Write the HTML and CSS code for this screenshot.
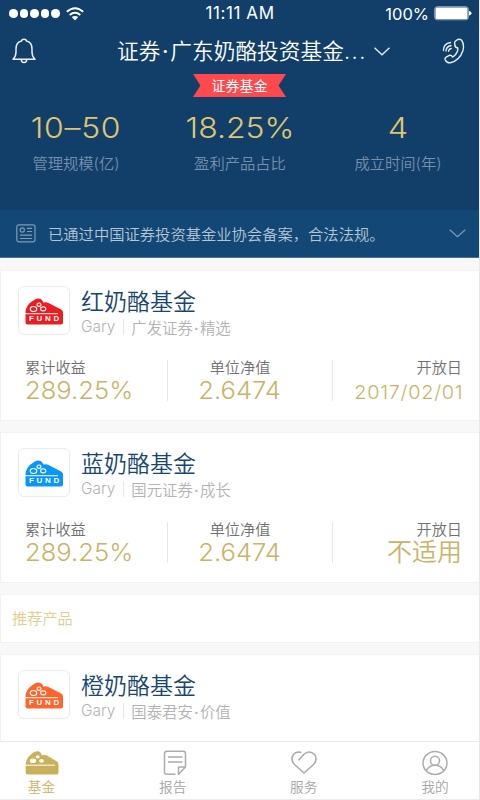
FILE: index.html
```html
<!DOCTYPE html>
<html lang="zh-CN">
<head>
<meta charset="utf-8">
<title>基金</title>
<link rel="stylesheet" href="styles.css">
</head>
<body>
<svg class="defs" width="0" height="0" aria-hidden="true">
  <symbol id="cheese" viewBox="0 0 38 27">
    <path fill="currentColor" d="M.5 13.500Q1.500 7.500 5.500 4.500L9.500 1.800Q13 -.5 16 1.300Q18 2.500 18.300 4.500L21 4.300Q23 4.500 25 5.800L36.500 11.800Q38 12.700 38 14.500V24.500Q38 26.500 36 26.500H2.500Q.5 26.500 .5 24.500Z"/>
    <path stroke="#fff" stroke-width="1" d="M0 15.700H33"/>
    <g fill="none" stroke="#fff" stroke-width="1.100"><ellipse cx="8.500" cy="11" rx="3.300" ry="2.500"/><ellipse cx="14" cy="6.700" rx="2" ry="1.700"/><ellipse cx="18.200" cy="10.800" rx="2.600" ry="2.100"/></g>
  </symbol>
</svg>
<div class="app">
  <header class="header">
    <div class="status">
      <div class="signal"><i></i><i></i><i></i><i></i><i></i>
        <svg width="18" height="14" viewBox="0 0 18 14" fill="none" stroke="#fff" stroke-width="2"><path d="M.8 4.800Q9-2.300 17.200 4.800M3.700 8Q9 3.600 14.300 8"/><path fill="#fff" stroke="none" d="M5.800 10.100Q9 7.700 12.200 10.100L9 13.400Z"/></svg>
      </div>
      <div class="time">11:11 AM</div>
      <div class="power"><span>100%</span>
        <svg width="38" height="15" viewBox="0 0 38 15"><rect x=".75" y=".75" width="33.500" height="13" rx="2.500" fill="none" stroke="#9fb3c6"/><rect x="1.500" y="1.500" width="32" height="11.500" rx="1.500" fill="#fff"/><path fill="#fff" d="M35 5Q37.500 5.300 37.500 7.300T35 9.600Z"/></svg>
      </div>
    </div>
    <div class="nav">
      <svg class="bell" width="24" height="26" viewBox="0 0 24 26" fill="none" stroke="#e9eef3" stroke-width="1.500" stroke-linejoin="round"><path d="M1 21.200Q4 18.500 4 14V11Q4 4.200 9.600 3Q9.800 1.200 12 1.200T14.400 3Q20 4.200 20 11V14Q20 18.500 23 21.200ZM9.300 21.500Q9.300 24.500 12 24.500T14.700 21.500"/></svg>
      <h1 class="title">证券<b class="dot">·</b>广东奶酪投资基金<span class="more">...</span></h1>
      <svg class="caret" width="16" height="9" viewBox="0 0 16 9" fill="none" stroke="#e9eef3" stroke-width="1.300"><path d="M.5 .7L8 7.800L15.500 .7"/></svg>
      <svg class="phone" width="23" height="26" viewBox="0 0 23 26" fill="none" stroke="#e9eef3" stroke-width="1.400" stroke-linejoin="round" stroke-linecap="round"><path d="M14.500 2.300Q17 .5 19.500 2Q22.700 6.500 20.800 13Q17.500 22.500 8.500 24.700Q5 25.200 3.200 21.800Q2.500 20 4.500 18.800L7.500 17.300Q9.500 16.800 10.500 19Q14 17.300 15.700 12.500Q16 11 15.600 9.800Q13.300 9.700 12.900 7.500L12.600 4.500Q12.700 3.200 14.500 2.300Z"/><path d="M1.500 12.500Q1.500 5.500 8.500 4.500M4 13Q4.200 8.500 9 7.500M6.500 13.200Q7 11 9.200 10.500"/></svg>
    </div>
    <div class="ribbon">证券基金</div>
    <div class="stats">
      <div><strong class="range">10–50</strong><span>管理规模(亿)</span></div>
      <div><strong>18.25%</strong><span>盈利产品占比</span></div>
      <div><strong class="years">4</strong><span>成立时间(年)</span></div>
    </div>
    <div class="notice">
      <svg width="20" height="19" viewBox="0 0 20 19" fill="none" stroke="#7e9ab4" stroke-width="1.200"><rect x=".8" y=".8" width="18.200" height="17" rx="2"/><circle cx="6.300" cy="6" r="2.100"/><path d="M11 4.300H16M11 7.500H16M4 11.200H16M4 14.500H16"/></svg>
      <p>已通过中国证券投资基金业协会备案，合法法规。</p>
      <svg width="17" height="9" viewBox="0 0 17 9" fill="none" stroke="#7e9ab4" stroke-width="1.200"><path d="M.7 .7L8.500 7.800L16.300 .7"/></svg>
    </div>
  </header>

  <main class="list">
    <article class="card">
      <div class="head">
        <div class="logo red"><svg width="38" height="27"><use href="#cheese"/></svg><em>FUND</em></div>
        <div class="names"><h2>红奶酪基金</h2><p><span class="owner">Gary</span><span class="org">广发证券<b class="dot">·</b>精选</span></p></div>
      </div>
      <div class="figures">
        <div><label>累计收益</label><strong>289.25%</strong></div>
        <div class="mid"><label>单位净值</label><strong>2.6474</strong></div>
        <div class="end"><label>开放日</label><strong class="date">2017/02/01</strong></div>
      </div>
    </article>
    <article class="card">
      <div class="head">
        <div class="logo blue"><svg width="38" height="27"><use href="#cheese"/></svg><em>FUND</em></div>
        <div class="names"><h2>蓝奶酪基金</h2><p><span class="owner">Gary</span><span class="org">国元证券<b class="dot">·</b>成长</span></p></div>
      </div>
      <div class="figures">
        <div><label>累计收益</label><strong>289.25%</strong></div>
        <div class="mid"><label>单位净值</label><strong>2.6474</strong></div>
        <div class="end"><label>开放日</label><strong class="na">不适用</strong></div>
      </div>
    </article>
    <h3 class="section">推荐产品</h3>
    <article class="card last">
      <div class="head">
        <div class="logo orange"><svg width="38" height="27"><use href="#cheese"/></svg><em>FUND</em></div>
        <div class="names"><h2>橙奶酪基金</h2><p><span class="owner">Gary</span><span class="org">国泰君安<b class="dot">·</b>价值</span></p></div>
      </div>
    </article>
  </main>

  <nav class="tabs">
    <a class="active"><svg width="34" height="26" viewBox="0 0 34 26"><path fill="#c9b15c" d="M.7 14Q1.500 7.500 6 4.500Q10 .5 13.500 1.300Q16 2 16.700 5.200L20 5Q22 5.300 24 6.800L32 11.500Q33.500 12.500 33.500 14.500V22.500Q33.500 24.500 31.500 24.500H2.500Q.7 24.500 .7 22.500Z"/><path stroke="#fff" d="M1 15.200H30"/><g fill="#fff"><ellipse cx="8" cy="10.800" rx="3.200" ry="2.300"/><ellipse cx="12.700" cy="6.800" rx="2" ry="1.600"/><ellipse cx="16.600" cy="10.800" rx="2.400" ry="1.900"/></g></svg><span>基金</span></a>
    <a><svg class="report" width="24" height="26" viewBox="0 0 24 26" fill="none" stroke="#acacac" stroke-width="1.500" stroke-linejoin="round"><path d="M12.500 24.300H4Q1.500 24.300 1.500 22V3.500Q1.500 1.200 4 1.200H20Q22.500 1.200 22.500 3.500V17L15.500 24.300V17H22M5 7H19.500M5 12H19.500"/></svg><span>报告</span></a>
    <a><svg width="26" height="26" viewBox="0 0 26 26" fill="none" stroke="#acacac" stroke-width="1.600" stroke-linecap="round"><path d="M8 9.800L13 4.300Q15.500 1.800 18.500 2Q25 3 25 9Q25 12 22.500 14.500L13 23L3.500 14.500Q1 12 1 9Q1.500 2 8 2L9.700 2.400"/></svg><span>服务</span></a>
    <a><svg width="26" height="26" viewBox="0 0 26 26" fill="none" stroke="#acacac" stroke-width="1.500"><ellipse cx="13" cy="13" rx="12" ry="11.500"/><circle cx="13" cy="10.800" r="4.500"/><path d="M4.300 20.500Q7 15.300 13 15.300T21.700 20.500"/></svg><span>我的</span></a>
  </nav>
</div>
</body>
</html>
```
FILE: styles.css
```css
* { box-sizing: border-box; margin: 0; padding: 0; }
body {
  width: 480px;
  height: 800px;
  overflow: hidden;
  background: #f8f8f8;
  font-family: Inter, "Noto Sans CJK SC", sans-serif;
  font-weight: 350;
}
svg { display: block; flex: none; }
.defs { position: absolute; }
.app { height: 800px; display: flex; flex-direction: column; border-right: 1px solid #e8e8e8; }
.dot { display: inline-block; width: .46em; text-align: center; font-weight: 500; }

.header { height: 258px; flex: none; background: #113f69; border-bottom: 1px solid #47709a; color: #fff; display: flex; flex-direction: column; }
.status { height: 27px; flex: none; display: grid; grid-template-columns: 1fr auto 1fr; align-items: center; padding: 0 8px 0 9px; font-size: 16.500px; font-weight: 400; }
.signal { display: flex; gap: 2px; }
.signal i { width: 8.500px; height: 8.500px; border-radius: 50%; background: #fff; align-self: center; }
.signal svg { margin-left: 4px; }
.time { line-height: 27px; font-size: 17px; letter-spacing: .6px; }
.power { display: flex; justify-content: flex-end; align-items: center; gap: 5px; margin-right: -1px; }

.nav { height: 46px; flex: none; display: flex; align-items: center; padding: 1px 14px 0 12px; }
.title { margin-left: 81px; width: 250px; font-size: 21.700px; line-height: 44px; font-weight: 350; white-space: nowrap; }
.more { letter-spacing: 1.600px; }
.caret { margin-left: 7px; margin-top: 2px; }
.phone { margin-left: auto; }
.ribbon { width: 93px; height: 23px; flex: none; margin: 1px 0 0 193px; background: #ff4a4d; clip-path: polygon(0 0, 100% 0, 92% 50%, 100% 100%, 0 100%, 8% 50%); text-align: center; font-size: 14px; line-height: 23px; font-weight: 400; }

.stats { height: 113px; flex: none; display: grid; grid-template-columns: 152px 176px 140px; padding-top: 13px; text-align: center; }
.stats strong { display: block; font-size: 29px; line-height: 36px; font-weight: 350; color: #e0c76f; transform: scaleX(1.1); }
.stats .range { letter-spacing: .7px; }
.stats .years { transform: scaleX(1.12); }
.stats span { display: block; margin-top: 6px; font-size: 15.300px; line-height: 24px; color: #768fab; }
.notice { height: 47px; flex: none; background: #134876; display: flex; align-items: center; padding: 0 13px 0 16px; }
.notice p { flex: 1; margin-left: 12px; font-size: 15.300px; line-height: 22px; padding-top: 2px; color: #b6c5d4; white-space: nowrap; }

.list { flex: 1; min-height: 0; overflow: hidden; padding-top: 13px; }
.card { height: 149px; margin: 0 0 13px 1px; padding: 15px 17px 0; background: #fff; box-shadow: 0 0 0 1px #f2f2f2; }
.head { display: flex; height: 52px; }
.logo { position: relative; width: 52px; height: 49px; border: 1px solid #eaeaea; border-radius: 6px; padding: 11px 0 0 6px; }
.logo em { position: absolute; left: 10px; top: 27px; font: 600 8px/9px "Liberation Sans", sans-serif; letter-spacing: 2.700px; color: #fff; }
.red { color: #ee1c20; }
.blue { color: #0796fb; }
.orange { color: #ff642b; }
.names { margin-left: 11px; }
.names h2 { font-size: 23px; line-height: 32px; font-weight: 350; color: #174672; }
.names p { display: flex; align-items: center; height: 18px; font-size: 15.400px; color: #b3b3b3; }
.owner { line-height: 15px; padding: 0 8px 1px 0; border-right: 1px solid #e7e7e7; }
.org { padding-left: 7px; }
.figures { display: grid; grid-template-columns: 149px 166px 1fr; grid-template-rows: 41px; height: 41px; margin-top: 22px; }
.figures > div { display: flex; flex-direction: column; padding-left: 7px; }
.figures .mid { border: solid #e7e7e7; border-width: 0 1px; align-items: center; padding: 0 20px 0 0; }
.figures .end { align-items: flex-end; padding: 0; }
.figures label { font-size: 15.200px; line-height: 15px; color: #707070; white-space: nowrap; }
.figures strong { margin-top: 2px; font-size: 24.500px; line-height: 27px; font-weight: 350; color: #cbb366; white-space: nowrap; transform: scaleX(1.045); transform-origin: left; }
.figures .mid strong { transform-origin: center; }
.figures .date { font-size: 19px; line-height: 32px; letter-spacing: .7px; margin-right: -1px; transform-origin: right; }
.figures .na { font-size: 25px; transform: none; }
.section { height: 47px; margin: 0 0 13px 1px; padding-left: 11px; background: #fff; box-shadow: 0 0 0 1px #f2f2f2; font-size: 15.200px; line-height: 47px; font-weight: 350; color: #e2cd8c; }

.tabs { height: 59px; flex: none; display: flex; justify-content: space-between; padding: 8px 2.500px 0 0; background: #fff; border-top: 1px solid #e9e9e9; border-bottom: 1px solid #ededed; }
.tabs a { width: 83px; display: flex; flex-direction: column; align-items: center; color: #a5a5a5; }
.tabs span { margin-top: 1px; font-size: 13.700px; line-height: 21px; }
.tabs .report { margin-left: 4px; }
.tabs .active { color: #cbb366; }
```
